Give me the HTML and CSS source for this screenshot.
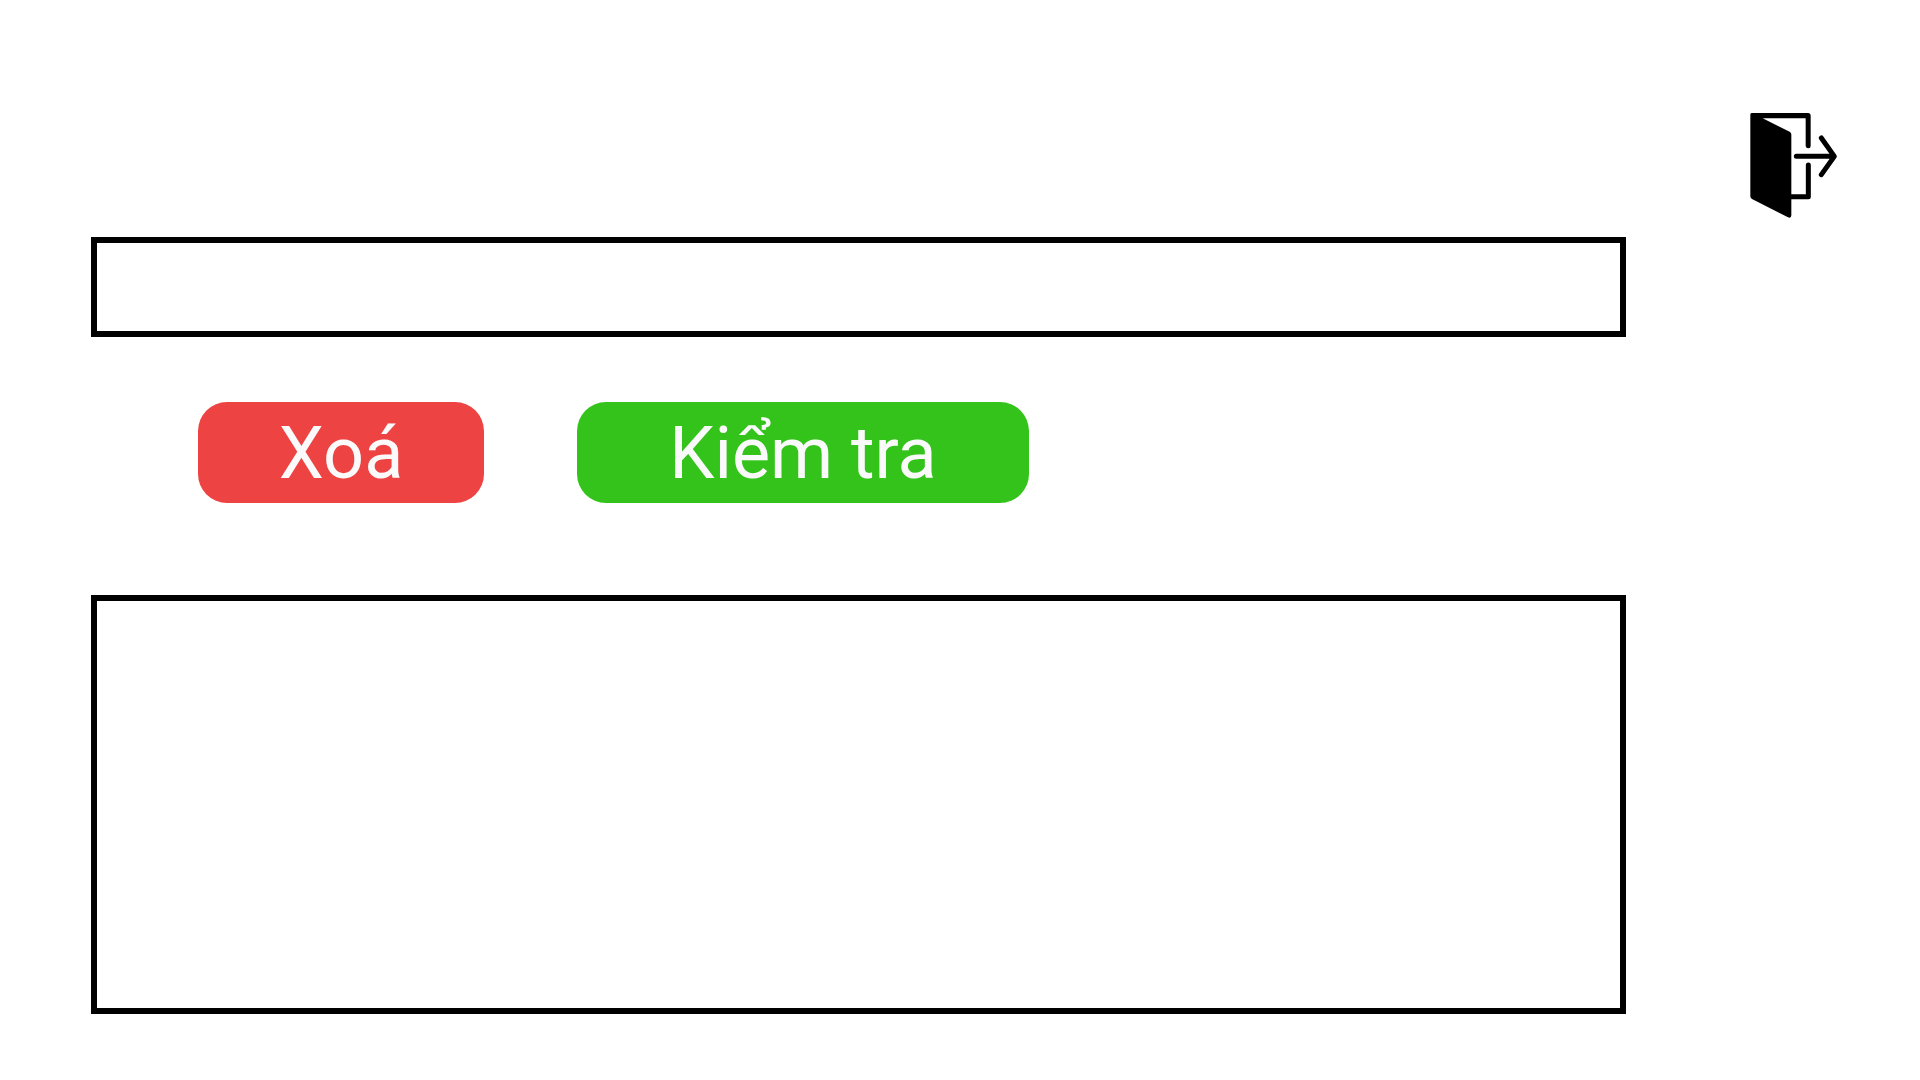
FILE: index.html
```html
<!DOCTYPE html>
<html lang="vi">
<head>
<meta charset="utf-8">
<meta name="viewport" content="width=device-width, initial-scale=1">
<title>Kiểm tra</title>
<link rel="stylesheet" href="styles.css">
</head>
<body>
<div class="page">
  <header class="topbar">
    <a class="exit" href="#" aria-label="Thoát">
      <svg class="exit-icon" viewBox="0 0 360 390" aria-hidden="true">
        <path fill="#000" d="M50 39H219Q227 39 227 47V138Q227 145 220 145T212 138V55H83L164 95Q169 98 169 103V346Q169 356 159 352L51 297Q46 294 46 289V44Q46 39 50 39Z"/>
        <path fill="none" stroke="#000" stroke-width="15" stroke-linecap="round" stroke-linejoin="round" d="M220 195V290H165"/>
        <path fill="none" stroke="#000" stroke-width="15" stroke-linecap="round" stroke-linejoin="round" d="M184 169H296M259 114L298 169L259 224"/>
      </svg>
    </a>
  </header>
  <main class="board">
    <input class="field answer" type="text" aria-label="Câu trả lời">
    <div class="actions">
      <button class="button button-clear" type="button">Xoá</button>
      <button class="button button-check" type="button">Kiểm tra</button>
    </div>
    <textarea class="field words" aria-label="Nội dung"></textarea>
  </main>
</div>
</body>
</html>
```
FILE: styles.css
```css
* {
  box-sizing: border-box;
}

body {
  margin: 0;
  background: #fff;
  color: #000;
  font-family: Roboto, "Noto Sans", sans-serif;
}

.page {
  display: flex;
  flex-direction: column;
  min-height: 100vh;
  padding: 100px 65px 66px 91px;
}

.topbar {
  display: flex;
  justify-content: flex-end;
  margin-bottom: 7px;
}

.exit,
.exit-icon {
  display: block;
}

.exit-icon {
  width: 120px;
  height: 130px;
}

.board {
  display: flex;
  flex: 1;
  flex-direction: column;
  margin-right: 229px;
}

.field {
  display: block;
  width: 100%;
  margin: 0;
  padding: 8px 24px;
  border: 6px solid #000;
  border-radius: 0;
  background: #fff;
  color: inherit;
  font: inherit;
  font-size: 48px;
}

.answer {
  height: 100px;
}

.words {
  flex: 1;
  min-height: 240px;
  resize: none;
}

.actions {
  display: flex;
  flex-wrap: wrap;
  gap: 24px 93px;
  padding: 65px 0 92px 107px;
}

.button {
  height: 101px;
  padding: 2px 0 0;
  border: 0;
  border-radius: 29px;
  color: #fafafa;
  font: inherit;
  font-size: 72px;
  line-height: 84px;
  cursor: pointer;
}

.button-clear {
  width: 286px;
  background: #ee4343;
}

.button-check {
  width: 452px;
  background: #34c31a;
}
```
